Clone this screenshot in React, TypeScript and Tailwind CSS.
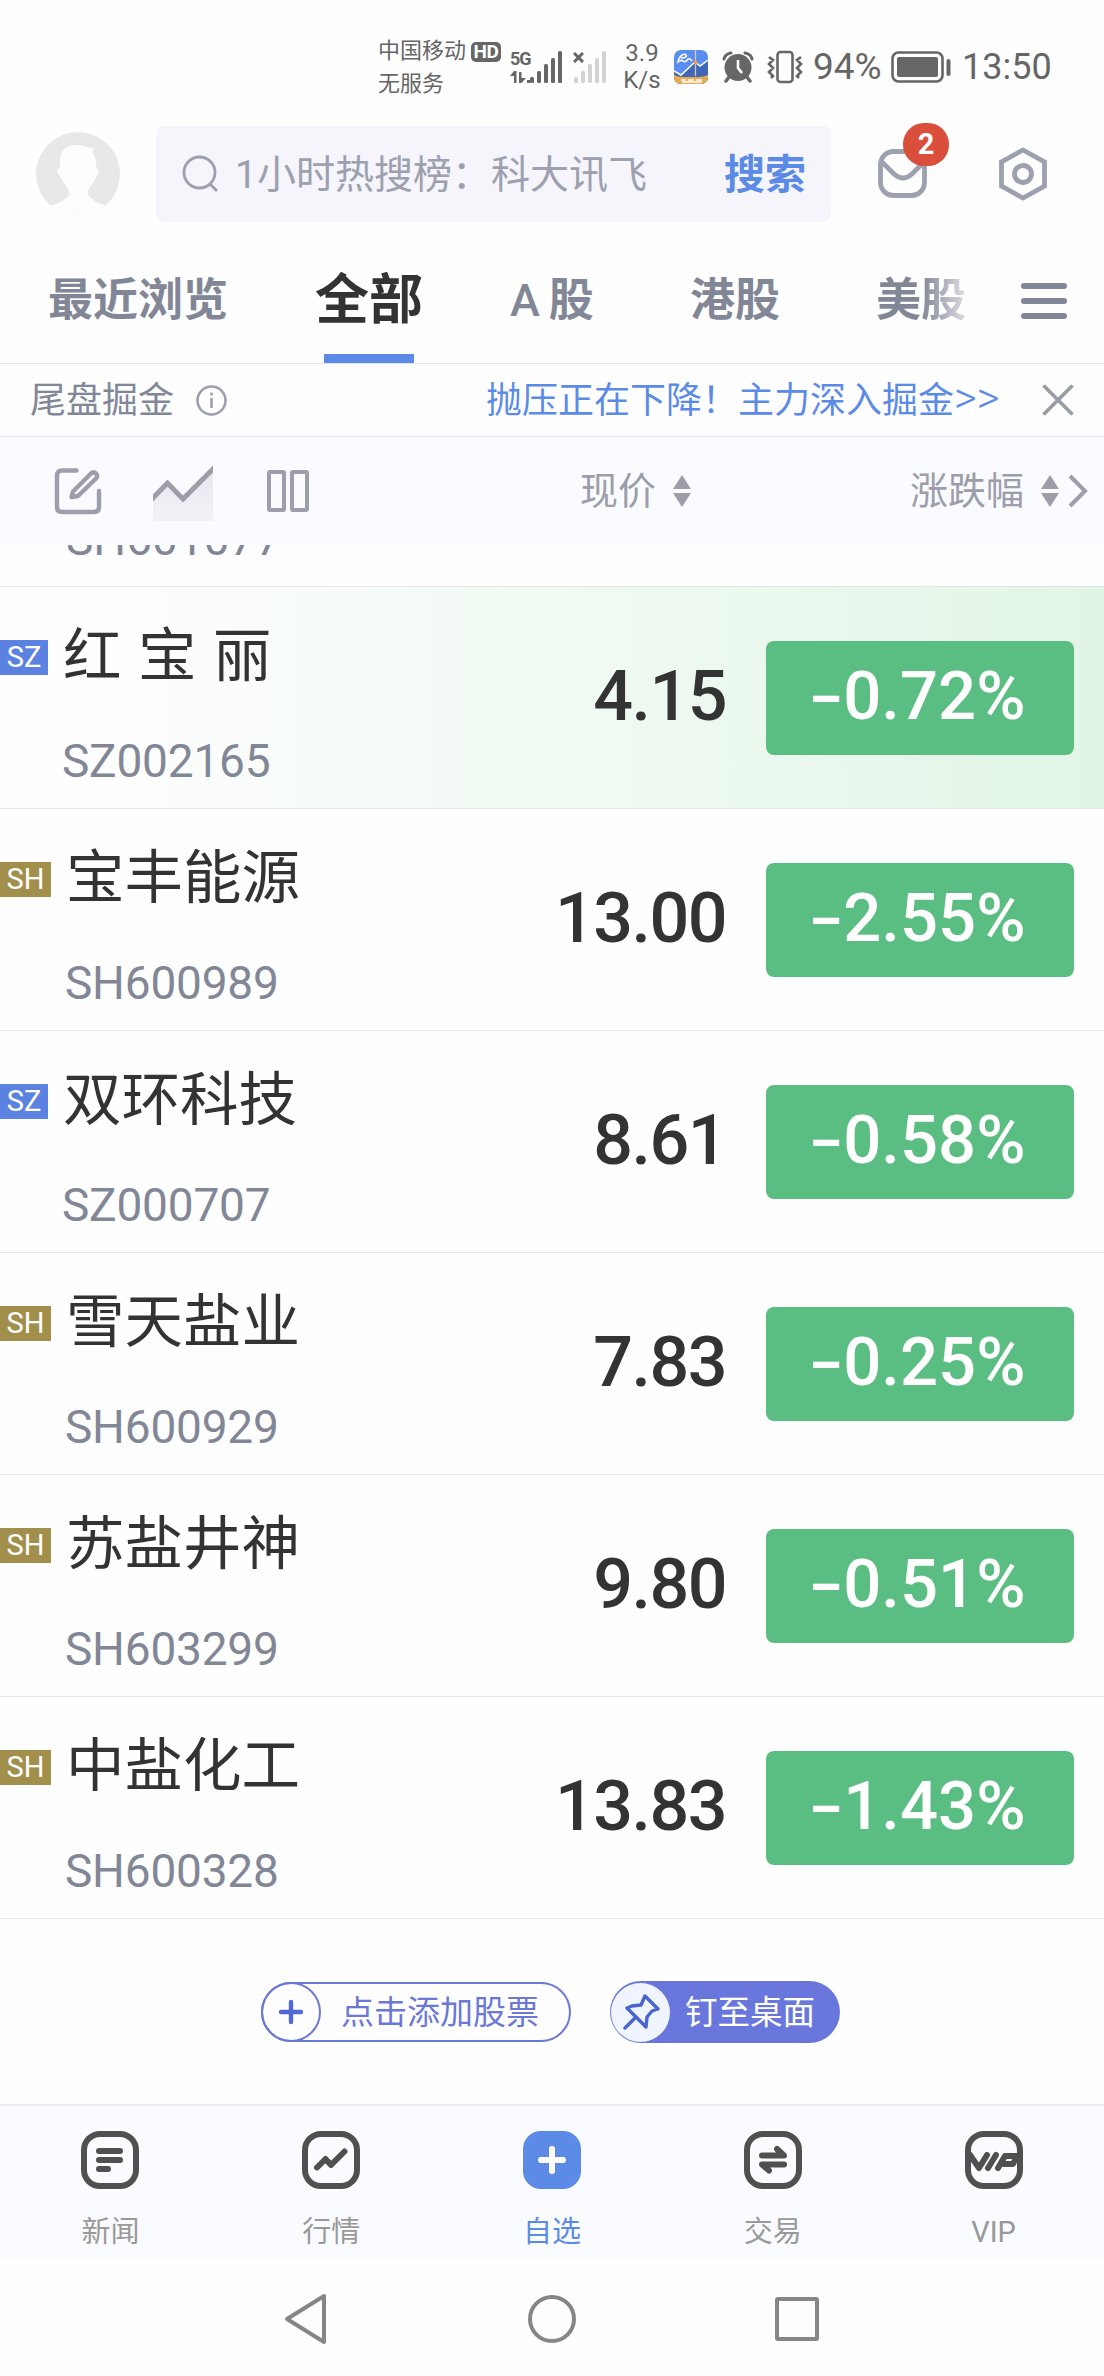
import type { ReactNode } from "react"

interface Stock {
  market: "SZ" | "SH"
  name: string
  code: string
  price: string
  change: string
  highlighted?: boolean
}

const STOCKS: Stock[] = [
  { market: "SZ", name: "红 宝 丽", code: "SZ002165", price: "4.15", change: "0.72%", highlighted: true },
  { market: "SH", name: "宝丰能源", code: "SH600989", price: "13.00", change: "2.55%" },
  { market: "SZ", name: "双环科技", code: "SZ000707", price: "8.61", change: "0.58%" },
  { market: "SH", name: "雪天盐业", code: "SH600929", price: "7.83", change: "0.25%" },
  { market: "SH", name: "苏盐井神", code: "SH603299", price: "9.80", change: "0.51%" },
  { market: "SH", name: "中盐化工", code: "SH600328", price: "13.83", change: "1.43%" },
]

export default function App() {
  return (
    <div className="w-[1104px] h-[2376px] overflow-hidden flex flex-col bg-[#fefefe] whitespace-nowrap font-['Roboto','Noto_Sans_CJK_SC',sans-serif]">
      <StatusBar />
      <SearchHeader />
      <MarketTabs />
      <Notice />
      <ListToolbar />

      {/* Row scrolled under the toolbar */}
      <div className="h-[42px] shrink-0 overflow-hidden border-b border-[#e3e5ea] pl-[66px]">
        <p className="-mt-[33px] text-[46px] leading-[54px] text-[#828797]">SH601077</p>
      </div>

      {STOCKS.map((stock) => (
        <StockRow key={stock.code} stock={stock} />
      ))}

      <Actions />
      <BottomNav />
      <SystemNav />
    </div>
  )
}

function StatusBar() {
  return (
    <div className="h-[110px] shrink-0 flex items-center pt-[24px] pl-[378px] text-[#666]">
      <div className="w-[93px] text-[22px] leading-[33px]">
        <p>中国移动</p>
        <p>无服务</p>
      </div>
      <div className="-mt-[30px] w-[30px] h-[20px] rounded-[5px] bg-[#666] text-white text-[19px] leading-[20px] font-bold text-center tracking-tight">HD</div>
      <div className="ml-[9px] w-[20px]">
        <p className="text-[18px] leading-[18px] font-bold tracking-[-1px]">5G</p>
        <svg className="mt-[3px]" width="20" height="13" viewBox="0 0 20 13" fill="#666">
          <path d="M4 0h2.500v12H4V5H0zM9 1h2.500v6H16l-4.500 5H9zM17 9h3v3h-3z" />
        </svg>
      </div>
      <SignalBars className="text-[#666]" />
      <svg className="ml-[10px] -mr-[10px] self-start mt-[28px]" width="11" height="11" viewBox="0 0 11 11" stroke="#666" strokeWidth="3">
        <path d="M1 1l9 9M10 1l-9 9" />
      </svg>
      <SignalBars className="text-[#d3d3d3]" />
      <div className="ml-[16px] w-[38px] text-[24px] leading-[27px] text-center">
        <p>3.9</p>
        <p>K/s</p>
      </div>

      {/* Stock app notification */}
      <svg className="ml-[13px]" width="34" height="34" viewBox="0 0 34 34">
        <defs>
          <clipPath id="notification">
            <rect width="34" height="34" rx="7" />
          </clipPath>
        </defs>
        <g clipPath="url(#notification)">
          <rect width="34" height="34" fill="#5a8df0" />
          <path d="M0 22l6 3 14-13 5 4 9-6v24H0z" fill="#4168b8" />
          <path d="M0 21l7 4 14-13 5 4 8-6" fill="none" stroke="#fff" strokeWidth="1.500" />
          <path d="M21.500 0v26" stroke="#d9c9b8" strokeWidth="1.200" />
          <path d="M0 25q4 2 9 2h16q5 0 9-2v9H0z" fill="#ecaa4e" />
          <path d="M4 11c1-5 6-8 8-6s-4 4-5 2M3 13q4-4 6-2t4-1 5 1" fill="none" stroke="#fff" strokeWidth="1.600" />
          <circle cx="21.500" cy="12.500" r="2" fill="#f09a5a" />
          <path d="M7 30h5M14 30h6M22 30h6M8 32h20" stroke="#fff" strokeWidth="1.400" />
        </g>
      </svg>

      {/* Alarm */}
      <svg className="ml-[14px]" width="32" height="32" viewBox="0 0 32 32">
        <circle cx="16" cy="16.500" r="13.500" fill="#666" />
        <path d="M2 8q1-5 7-6M30 8q-1-5-7-6" fill="none" stroke="#666" strokeWidth="3" strokeLinecap="round" />
        <path d="M7 26l-3 4M25 26l3 4" stroke="#666" strokeWidth="3.500" strokeLinecap="round" />
        <path d="M16 9v8l4 5" fill="none" stroke="#fefefe" strokeWidth="2.600" />
      </svg>

      {/* Vibrate */}
      <svg className="ml-[12px]" width="38" height="34" viewBox="0 0 38 34" fill="none" stroke="#666" strokeWidth="2.600">
        <rect x="11.500" y="2" width="15" height="30" rx="3" />
        <path d="M3 7l4 3-4 4 4 4-4 4 4 4-2 2M35 7l-4 3 4 4-4 4 4 4-4 4 2 2" />
      </svg>
      <span className="ml-[9px] w-[78px] text-[37px] leading-[36px]">94%</span>

      <svg width="60" height="33" viewBox="0 0 60 33">
        <rect x="1.500" y="1.500" width="50" height="29" rx="6" fill="none" stroke="#666" strokeWidth="2.600" />
        <rect x="6" y="6" width="41" height="20" rx="2" fill="#666" />
        <rect x="55.500" y="8" width="4" height="17" rx="2" fill="#666" />
      </svg>
      <span className="ml-[11px] text-[36px] leading-[36px]">13:50</span>
    </div>
  )
}

function SignalBars({ className }: { className: string }) {
  return (
    <svg className={className} width="33" height="32" viewBox="0 0 33 32" fill="currentColor">
      <rect x="0" y="26" width="4" height="6" rx="1.500" />
      <rect x="7" y="20" width="4" height="12" rx="1.500" />
      <rect x="14" y="13" width="4" height="19" rx="1.500" />
      <rect x="21" y="7" width="4" height="25" rx="1.500" />
      <rect x="28" y="0" width="4" height="32" rx="1.500" />
    </svg>
  )
}

function SearchHeader() {
  return (
    <div className="h-[128px] shrink-0 flex items-center pl-[36px] text-[#9ca0af]">
      <svg width="84" height="88" viewBox="0 0 84 88">
        <defs>
          <clipPath id="avatar">
            <circle cx="42" cy="44" r="42" />
          </clipPath>
        </defs>
        <g clipPath="url(#avatar)">
          <rect width="84" height="88" fill="#e8e8e8" />
          <path d="M24 38V29q1-14 17.300-14 5 0 9 2 4 1 8 .5l-2.300 4q4 6 4 12l.7 5q3 0 2 4-4 9-10.700 17.500V65q4 6 17.500 10.700V88H15V75.700Q29 71 33 65v-5Q26 51 21.300 41.700q-1-3 2.700-3.700z" fill="#fdfdfd" />
        </g>
      </svg>

      <div className="ml-[36px] w-[675px] h-[96px] rounded-[8px] bg-[#f5f5fb] flex items-center pl-[26px]">
        <svg width="38" height="38" viewBox="0 0 38 38" fill="none" stroke="currentColor" strokeWidth="2.800">
          <circle cx="17.500" cy="17.500" r="15.500" />
          <path d="M28 29l7 7" />
        </svg>
        <span className="ml-[15px] w-[489px] text-[39px] leading-[48px] pt-[2px]">1小时热搜榜：科大讯飞</span>
        <span className="text-[41px] leading-[48px] pt-[2px] font-bold text-[#5b8be6]">搜索</span>
      </div>

      <div className="relative ml-[46px]">
        <svg width="52" height="52" viewBox="0 0 52 52" fill="none" stroke="currentColor" strokeWidth="4.800">
          <rect x="3.500" y="3.500" width="44" height="44" rx="13" />
          <path d="M5 14l12 12q9 8 18 0l12-12" />
        </svg>
        <span className="absolute left-[26px] -top-[25px] w-[46px] h-[43px] rounded-[21px] bg-[#d94f3c] text-white text-[29px] leading-[43px] font-bold text-center">2</span>
      </div>

      <svg className="ml-[68px]" width="52" height="56" viewBox="0 0 52 56" fill="none" stroke="currentColor" strokeWidth="4.800">
        <path d="M26 4l21.500 11.800v24.400L26 52 4.500 40.200V15.800z" />
        <circle cx="26" cy="28" r="8.500" />
      </svg>
    </div>
  )
}

function MarketTabs() {
  return (
    <div className="h-[126px] shrink-0 flex items-center border-b border-[#e3e5ea] pl-[48px] text-[45px] leading-[60px] font-bold text-[#828797]">
      <span className="w-[267px]">最近浏览</span>
      <div className="relative h-full w-[108px] flex items-center text-[54px] text-[#333]">
        全部
        <span className="absolute left-[9px] bottom-0 w-[90px] h-[9px] bg-[#5b8be6]" />
      </div>
      <span className="ml-[87px] w-[180px] font-medium">A<span className="ml-[9px] font-bold">股</span></span>
      <span className="w-[186px]">港股</span>
      <span className="w-[90px] bg-gradient-to-r from-[#828797] from-50% to-[#dcdde2] bg-clip-text text-transparent">美股</span>
      <svg className="ml-[54px]" width="48" height="42" viewBox="0 0 48 42" stroke="#828797" strokeWidth="6" strokeLinecap="round">
        <path d="M4 6h40M4 21h40M4 36h40" />
      </svg>
    </div>
  )
}

function Notice() {
  return (
    <div className="h-[73px] shrink-0 flex items-center border-b border-[#e3e5ea] pl-[30px] text-[36px] leading-[48px] text-[#828797]">
      <span className="w-[165px] pt-[2px]">尾盘掘金</span>
      <svg width="33" height="33" viewBox="0 0 33 33" fill="none" stroke="#9ca0af" strokeWidth="2.600">
        <circle cx="16.500" cy="16.500" r="14" />
        <path d="M16.500 14v10" />
        <path d="M16.500 8.500v3" />
      </svg>
      <span className="ml-[258px] w-[556px] pt-[2px] text-[#5b8be6]">
        抛压正在下降！主力深入掘金<span className="text-[44px] leading-[36px] font-light">&gt;&gt;</span>
      </span>
      <svg width="32" height="32" viewBox="0 0 32 32" stroke="#999ca5" strokeWidth="3.600">
        <path d="M1.500 1.500l29 29M30.500 1.500l-29 29" />
      </svg>
    </div>
  )
}

function ListToolbar() {
  return (
    <div className="h-[108px] shrink-0 flex items-center bg-[#fafbfe] pl-[54px] text-[38px] leading-[48px] text-[#9c9eab]">
      <svg width="48" height="48" viewBox="0 0 48 48" fill="none" stroke="currentColor" strokeWidth="4.400" strokeLinecap="round" strokeLinejoin="round">
        <path d="M22.500 3.500H8q-5 0-5 5V40q0 5 5 5h32q5 0 5-5V24" />
        <path d="M19 24.500L37 6.500q2.500-2.200 5 0t0 5L24 29l-6.500 1z" />
      </svg>
      <svg className="ml-[51px] mt-[4px]" width="60" height="56" viewBox="0 0 60 56">
        <defs>
          <linearGradient id="area" x1="0" y1="0" x2="0" y2="1">
            <stop offset="0" stopColor="#e6e7ed" />
            <stop offset="1" stopColor="#f2f3f7" />
          </linearGradient>
        </defs>
        <path d="M0 33l14.500-15L30 34 60 3v53H0z" fill="url(#area)" />
        <path d="M-2 35l16.500-17L30 34 62 2" fill="none" stroke="#9c9ea8" strokeWidth="5" />
      </svg>
      <svg className="ml-[54px]" width="42" height="42" viewBox="0 0 42 42" fill="none" stroke="currentColor" strokeWidth="4">
        <rect x="2" y="2" width="15" height="38" rx="1" />
        <rect x="25" y="2" width="15" height="38" rx="1" />
      </svg>
      <span className="ml-[271px] w-[93px]">现价</span>
      <SortArrows />
      <span className="ml-[219px] w-[131px]">涨跌幅</span>
      <SortArrows />
      <svg className="ml-[9px]" width="20" height="34" viewBox="0 0 20 34" fill="none" stroke="currentColor" strokeWidth="4">
        <path d="M2 2l15 15L2 32" />
      </svg>
    </div>
  )
}

function SortArrows() {
  return (
    <svg width="18" height="32" viewBox="0 0 18 32" fill="#9c9ea8">
      <path d="M9 0l9 14H0zM0 18h18L9 32z" />
    </svg>
  )
}

function StockRow({ stock }: { stock: Stock }) {
  const isSZ = stock.market === "SZ"
  return (
    <div
      className={`h-[222px] shrink-0 flex border-b border-[#e3e5ea] ${
        stock.highlighted ? "bg-gradient-to-r from-[#fefefe] from-8% to-[#e1f5e6]" : ""
      }`}
    >
      <div className="w-[420px]">
        <div className="flex pt-[29px]">
          <span
            className={`mt-[24px] h-[35px] text-[29px] leading-[35px] text-center text-white ${
              isSZ ? "w-[48px] bg-[#5b82e0]" : "w-[51px] bg-[#a38f4c]"
            }`}
          >
            {stock.market}
          </span>
          <span className="ml-[15px] text-[58.500px] leading-[80px] text-[#333] [word-spacing:2px]">{stock.name}</span>
        </div>
        <p className={`mt-[38px] text-[46px] leading-[54px] tracking-[-0.2px] text-[#828797] ${isSZ ? "pl-[62px]" : "pl-[65px]"}`}>{stock.code}</p>
      </div>
      <span className="w-[306px] pt-[69px] text-right text-[70px] leading-[80px] tracking-[-1.5px] font-medium text-[#333]">{stock.price}</span>
      <div className="mt-[54px] ml-[40px] w-[308px] h-[114px] rounded-[8px] bg-[#5abd82] flex justify-center text-[67px] leading-[111px] font-medium text-white">
        <span className="inline-block scale-x-150 mr-[6px]">-</span>
        {stock.change}
      </div>
    </div>
  )
}

function Actions() {
  return (
    <div className="h-[185px] shrink-0 flex items-start pt-[62px] pl-[261px] text-[33px] leading-[60px]">
      <button className="mt-px w-[310px] h-[60px] rounded-full border-2 border-[#6b78d6] flex items-center text-[#6b78d6]">
        <span className="-ml-[2px] w-[60px] h-[60px] shrink-0 rounded-full border-2 border-[#6b78d6] flex items-center justify-center">
          <svg width="26" height="26" viewBox="0 0 26 26" stroke="#5069d6" strokeWidth="4.400" strokeLinecap="round">
            <path d="M13 3v20M3 13h20" />
          </svg>
        </span>
        <span className="ml-[20px] pt-px">点击添加股票</span>
      </button>
      <button className="ml-[39px] w-[230px] h-[62px] rounded-full bg-[#6977dc] flex items-center text-white">
        <span className="ml-[1px] w-[59px] h-[59px] shrink-0 rounded-full bg-[#eff4fe] flex items-center justify-center">
          <svg width="38" height="38" viewBox="0 0 38 38" fill="none" stroke="#4a66cc" strokeWidth="3.400" strokeLinecap="round" strokeLinejoin="round">
            <path d="M23 3l13 13-6 2-5 6-1 10L5 15l5-2 9-1zM14 24L3 35" />
          </svg>
        </span>
        <span className="ml-[15px] pt-px text-[32.500px]">钉至桌面</span>
      </button>
    </div>
  )
}

function BottomNav() {
  return (
    <div className="h-[157px] shrink-0 flex border-t-2 border-[#e6ecf2] bg-[#fafbfe]">
      <NavItem label="新闻">
        <NavFrame>
          <path d="M18 20h21M18 29h21M18 38h9" />
        </NavFrame>
      </NavItem>
      <NavItem label="行情">
        <NavFrame>
          <path d="M15 36.500l8.500-8.500 5.500 6 13.500-13.500" />
        </NavFrame>
      </NavItem>
      <NavItem label="自选" active>
        <svg width="58" height="58" viewBox="0 0 58 58" fill="none" stroke="#fff" strokeWidth="6" strokeLinecap="round">
          <rect width="58" height="58" rx="18" fill="#5b8be6" stroke="none" />
          <path d="M29 18v22M18 29h22" />
        </svg>
      </NavItem>
      <NavItem label="交易">
        <NavFrame>
          <path d="M18 24.500h22l-7-6.500M40 33.500H18l7 6" />
        </NavFrame>
      </NavItem>
      <NavItem label="VIP">
        <NavFrame>
          <path d="M5 24l9 13 8-13M31 24l-8 13M33 37l7-12h12l-4 8h-9" />
        </NavFrame>
      </NavItem>
    </div>
  )
}

function NavItem({ label, active, children }: { label: string; active?: boolean; children: ReactNode }) {
  return (
    <div className={`flex-1 flex flex-col items-center pt-[25px] ${active ? "text-[#5b8be6]" : "text-[#999]"}`}>
      {children}
      <span className="mt-[25px] text-[29px] leading-[36px]">{label}</span>
    </div>
  )
}

function NavFrame({ children }: { children: ReactNode }) {
  return (
    <svg width="58" height="58" viewBox="0 0 58 58" fill="none" stroke="#505050" strokeWidth="6" strokeLinecap="round" strokeLinejoin="round">
      <rect x="3" y="3" width="52" height="52" rx="16" />
      {children}
    </svg>
  )
}

function SystemNav() {
  return (
    <div className="h-[115px] shrink-0 flex items-center pl-[283px]">
      <svg width="46" height="52" viewBox="0 0 46 52" fill="none" stroke="#868686" strokeWidth="4" strokeLinejoin="round">
        <path d="M41 3v46L4 26z" />
      </svg>
      <svg className="ml-[198px]" width="50" height="50" viewBox="0 0 50 50" fill="none" stroke="#868686" strokeWidth="4">
        <circle cx="25" cy="25" r="22" />
      </svg>
      <svg className="ml-[197px]" width="46" height="46" viewBox="0 0 46 46" fill="none" stroke="#868686" strokeWidth="4">
        <rect x="3" y="3" width="40" height="40" rx="1" />
      </svg>
    </div>
  )
}
